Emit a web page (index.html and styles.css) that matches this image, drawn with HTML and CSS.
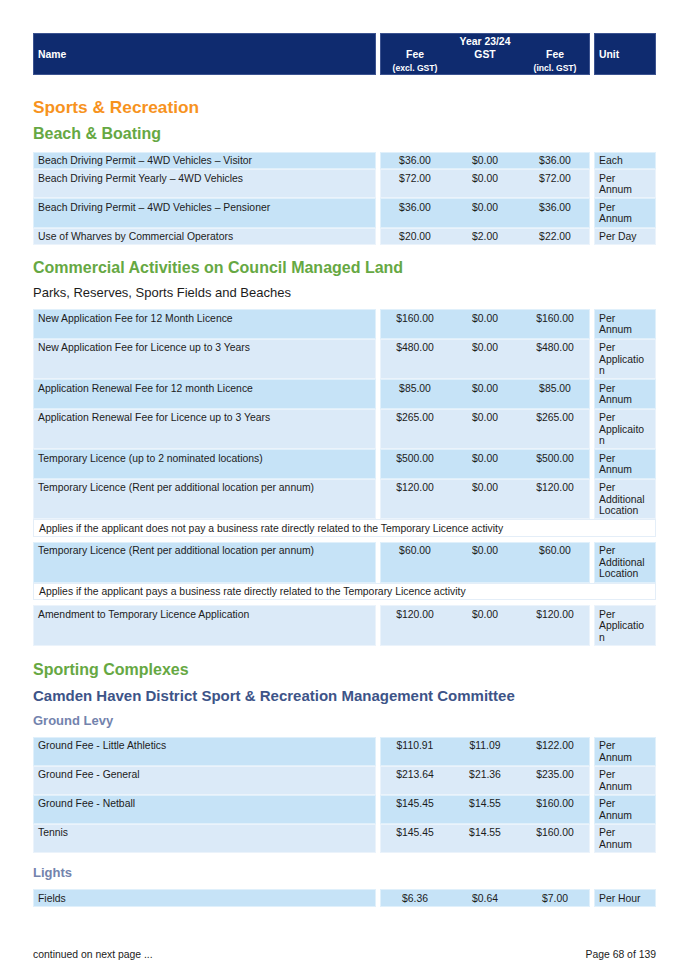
FILE: index.html
```html
<!DOCTYPE html>
<html lang="en">
<head>
<meta charset="utf-8">
<title>Fees and Charges – Sports &amp; Recreation</title>
<link rel="stylesheet" href="styles.css">
</head>
<body>
<div class="page">
  <div class="thead">
    <div class="th-name">Name</div>
    <div class="th-fees">
      <div class="th-year">Year 23/24</div>
      <div class="th-sub">
        <div class="th-col"><span class="big">Fee</span><span class="small">(excl. GST)</span></div>
        <div class="th-col"><span class="big">GST</span></div>
        <div class="th-col"><span class="big">Fee</span><span class="small">(incl. GST)</span></div>
      </div>
    </div>
    <div class="th-unit">Unit</div>
  </div>

  <h1 class="h-orange">Sports &amp; Recreation</h1>
  <h2 class="h-green h-beach">Beach &amp; Boating</h2>
  <div class="tbl tbl-1">
    <div class="row dark"><div class="c-name">Beach Driving Permit – 4WD Vehicles – Visitor</div><div class="c-fees"><span>$36.00</span><span>$0.00</span><span>$36.00</span></div><div class="c-unit">Each</div></div>
    <div class="row light"><div class="c-name">Beach Driving Permit Yearly – 4WD Vehicles</div><div class="c-fees"><span>$72.00</span><span>$0.00</span><span>$72.00</span></div><div class="c-unit">Per<br>Annum</div></div>
    <div class="row dark"><div class="c-name">Beach Driving Permit – 4WD Vehicles – Pensioner</div><div class="c-fees"><span>$36.00</span><span>$0.00</span><span>$36.00</span></div><div class="c-unit">Per<br>Annum</div></div>
    <div class="row light"><div class="c-name">Use of Wharves by Commercial Operators</div><div class="c-fees"><span>$20.00</span><span>$2.00</span><span>$22.00</span></div><div class="c-unit">Per Day</div></div>
  </div>

  <h2 class="h-green h-commercial">Commercial Activities on Council Managed Land</h2>
  <p class="sub-plain">Parks, Reserves, Sports Fields and Beaches</p>
  <div class="tbl tbl-2">
    <div class="row dark"><div class="c-name">New Application Fee for 12 Month Licence</div><div class="c-fees"><span>$160.00</span><span>$0.00</span><span>$160.00</span></div><div class="c-unit">Per<br>Annum</div></div>
    <div class="row light"><div class="c-name">New Application Fee for Licence up to 3 Years</div><div class="c-fees"><span>$480.00</span><span>$0.00</span><span>$480.00</span></div><div class="c-unit">Per<br>Applicatio<br>n</div></div>
    <div class="row dark"><div class="c-name">Application Renewal Fee for 12 month Licence</div><div class="c-fees"><span>$85.00</span><span>$0.00</span><span>$85.00</span></div><div class="c-unit">Per<br>Annum</div></div>
    <div class="row light"><div class="c-name">Application Renewal Fee for Licence up to 3 Years</div><div class="c-fees"><span>$265.00</span><span>$0.00</span><span>$265.00</span></div><div class="c-unit">Per<br>Applicaito<br>n</div></div>
    <div class="row dark"><div class="c-name">Temporary Licence (up to 2 nominated locations)</div><div class="c-fees"><span>$500.00</span><span>$0.00</span><span>$500.00</span></div><div class="c-unit">Per<br>Annum</div></div>
    <div class="row light"><div class="c-name">Temporary Licence (Rent per additional location per annum)</div><div class="c-fees"><span>$120.00</span><span>$0.00</span><span>$120.00</span></div><div class="c-unit">Per<br>Additional<br>Location</div></div>
    <div class="note">Applies if the applicant does not pay a business rate directly related to the Temporary Licence activity</div>
    <div class="row dark"><div class="c-name">Temporary Licence (Rent per additional location per annum)</div><div class="c-fees"><span>$60.00</span><span>$0.00</span><span>$60.00</span></div><div class="c-unit">Per<br>Additional<br>Location</div></div>
    <div class="note">Applies if the applicant pays a business rate directly related to the Temporary Licence activity</div>
    <div class="row light"><div class="c-name">Amendment to Temporary Licence Application</div><div class="c-fees"><span>$120.00</span><span>$0.00</span><span>$120.00</span></div><div class="c-unit">Per<br>Applicatio<br>n</div></div>
  </div>

  <h2 class="h-green h-sporting">Sporting Complexes</h2>
  <h3 class="h-blue">Camden Haven District Sport &amp; Recreation Management Committee</h3>
  <h4 class="h-grey h-levy">Ground Levy</h4>
  <div class="tbl tbl-3">
    <div class="row dark"><div class="c-name">Ground Fee - Little Athletics</div><div class="c-fees"><span>$110.91</span><span>$11.09</span><span>$122.00</span></div><div class="c-unit">Per<br>Annum</div></div>
    <div class="row light"><div class="c-name">Ground Fee - General</div><div class="c-fees"><span>$213.64</span><span>$21.36</span><span>$235.00</span></div><div class="c-unit">Per<br>Annum</div></div>
    <div class="row dark"><div class="c-name">Ground Fee - Netball</div><div class="c-fees"><span>$145.45</span><span>$14.55</span><span>$160.00</span></div><div class="c-unit">Per<br>Annum</div></div>
    <div class="row light"><div class="c-name">Tennis</div><div class="c-fees"><span>$145.45</span><span>$14.55</span><span>$160.00</span></div><div class="c-unit">Per<br>Annum</div></div>
  </div>

  <h4 class="h-grey h-lights">Lights</h4>
  <div class="tbl tbl-4">
    <div class="row dark"><div class="c-name">Fields</div><div class="c-fees"><span>$6.36</span><span>$0.64</span><span>$7.00</span></div><div class="c-unit">Per Hour</div></div>
  </div>

  <footer class="foot">
    <span>continued on next page ...</span>
    <span>Page 68 of 139</span>
  </footer>
</div>
</body>
</html>
```

FILE: styles.css
```css
html, body {
  margin: 0;
  padding: 0;
  background: #ffffff;
}

body {
  font-family: "Liberation Sans", Arial, Helvetica, sans-serif;
  color: #1c1c1c;
}

.page {
  width: 623px;
  padding: 33px 31px 0 33px;
}

/* ---------- header ---------- */
.thead {
  display: flex;
  gap: 4px;
  height: 42px;
  color: #ffffff;
  font-weight: bold;
  font-size: 10.4px;
}

.th-name,
.th-fees,
.th-unit {
  background: #0f2b6f;
  box-shadow: inset 0 0 0 1px #3c5390;
}

.th-name {
  width: 343px;
  display: flex;
  align-items: center;
  padding-left: 5px;
  box-sizing: border-box;
}

.th-fees {
  width: 210px;
  display: flex;
  flex-direction: column;
}

.th-year {
  height: 15px;
  padding-top: 2px;
  box-sizing: border-box;
  line-height: 13px;
  text-align: center;
}

.th-sub {
  flex: 1;
  display: grid;
  grid-template-columns: repeat(3, 1fr);
}

.th-col {
  display: flex;
  flex-direction: column;
  align-items: center;
}

.th-col .big {
  line-height: 13px;
}

.th-col .small {
  font-size: 8.6px;
  line-height: 14.6px;
}

.th-unit {
  flex: 1;
  display: flex;
  align-items: center;
  padding-left: 5px;
}

/* ---------- headings ---------- */
h1, h2, h3, h4, p {
  margin: 0;
}

.h-orange {
  color: #f7931e;
  font-size: 17.3px;
  line-height: 20px;
  margin-top: 22px;
}

.h-green {
  color: #66a843;
  font-size: 16px;
  line-height: 20px;
}

.h-beach { margin-top: 7px; }
.h-commercial { margin-top: 12.6px; }
.h-sporting { margin-top: 14px; }

.sub-plain {
  font-size: 13px;
  line-height: 16px;
  margin-top: 7px;
}

.h-blue {
  color: #3d5488;
  font-size: 15px;
  line-height: 20px;
  margin-top: 6px;
}

.h-grey {
  color: #7383ad;
  font-size: 13px;
  line-height: 16px;
}

.h-levy { margin-top: 6.6px; }
.h-lights { margin-top: 11.6px; }

/* ---------- tables ---------- */
.tbl {
  font-size: 10.4px;
  line-height: 11.6px;
}

.tbl-1 { margin-top: 7.7px; }
.tbl-2 { margin-top: 8.7px; }
.tbl-3 { margin-top: 8px; }
.tbl-4 { margin-top: 8.4px; }

.row {
  display: flex;
  gap: 4px;
}

.c-name,
.c-fees,
.c-unit {
  padding: 3.4px 5px 2.6px;
  box-shadow: inset 0 0 0 1px rgba(255, 255, 255, 0.45);
}

.c-name {
  width: 343px;
  box-sizing: border-box;
}

.c-fees {
  width: 210px;
  box-sizing: border-box;
  padding-left: 0;
  padding-right: 0;
  display: grid;
  grid-template-columns: repeat(3, 1fr);
  text-align: center;
}

.c-unit {
  flex: 1;
  padding-left: 5px;
  padding-right: 2px;
}

.dark .c-name,
.dark .c-fees,
.dark .c-unit {
  background: #c6e3f7;
}

.light .c-name,
.light .c-fees,
.light .c-unit {
  background: #dbeaf8;
}

.note {
  border: 1px solid #e4eef8;
  padding: 2.4px 5px 1.6px;
  margin-bottom: 5px;
}

/* ---------- footer ---------- */
.foot {
  display: flex;
  justify-content: space-between;
  font-size: 10.4px;
  line-height: 12px;
  margin-top: 42.5px;
}
```
